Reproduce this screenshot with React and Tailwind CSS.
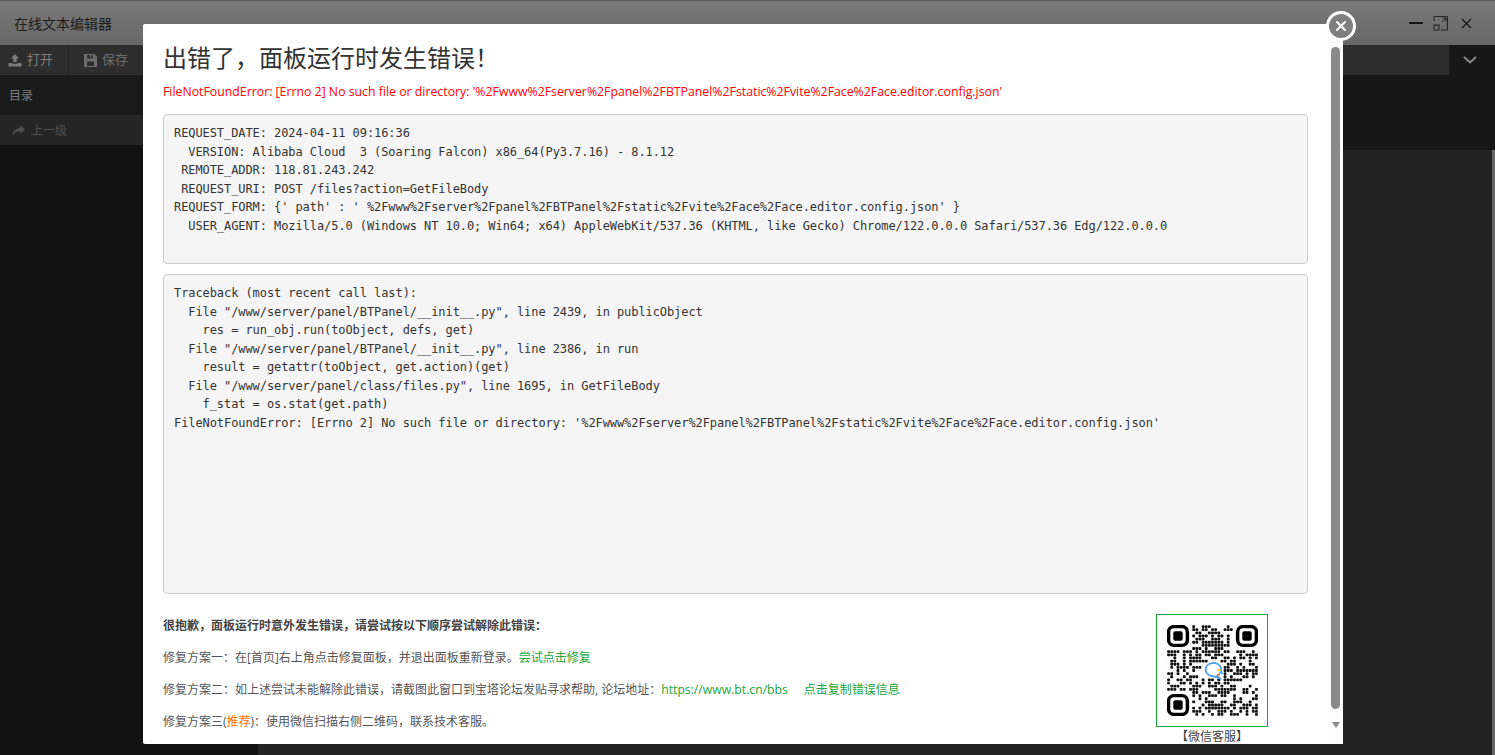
import React from 'react';
import { X } from 'lucide-react';

const sans = { fontFamily: '"Open Sans", "Noto Sans CJK SC", sans-serif' };
const mono = { fontFamily: '"DejaVu Sans Mono", monospace' };

const requestInfo = `REQUEST_DATE: 2024-04-11 09:16:36
  VERSION: Alibaba Cloud  3 (Soaring Falcon) x86_64(Py3.7.16) - 8.1.12
 REMOTE_ADDR: 118.81.243.242
 REQUEST_URI: POST /files?action=GetFileBody
REQUEST_FORM: {' path' : ' %2Fwww%2Fserver%2Fpanel%2FBTPanel%2Fstatic%2Fvite%2Face%2Face.editor.config.json' }
  USER_AGENT: Mozilla/5.0 (Windows NT 10.0; Win64; x64) AppleWebKit/537.36 (KHTML, like Gecko) Chrome/122.0.0.0 Safari/537.36 Edg/122.0.0.0`;

const traceback = `Traceback (most recent call last):
  File "/www/server/panel/BTPanel/__init__.py", line 2439, in publicObject
    res = run_obj.run(toObject, defs, get)
  File "/www/server/panel/BTPanel/__init__.py", line 2386, in run
    result = getattr(toObject, get.action)(get)
  File "/www/server/panel/class/files.py", line 1695, in GetFileBody
    f_stat = os.stat(get.path)
FileNotFoundError: [Errno 2] No such file or directory: '%2Fwww%2Fserver%2Fpanel%2FBTPanel%2Fstatic%2Fvite%2Face%2Face.editor.config.json'`;

// module pattern only has to look like the picture, deterministic so every run is the same
const qrModules = () => {
  const n = 29;
  const cells = [];
  let seed = 7;
  for (let y = 0; y < n; y++) {
    for (let x = 0; x < n; x++) {
      seed = (seed * 1103515245 + 12345) & 0x7fffffff;
      const inFinder = (x < 8 && y < 8) || (x > 20 && y < 8) || (x < 8 && y > 20);
      const inLogo = x > 10 && x < 18 && y > 11 && y < 17;
      if (!inFinder && !inLogo && (seed >> 16) % 100 < 54) cells.push([x, y]);
    }
  }
  return cells;
};

const Finder = ({ x, y }) => (
  <g>
    <rect x={x + 0.5} y={y + 0.5} width="6" height="6" rx="1.7" fill="none" stroke="#000" strokeWidth="1.1" />
    <rect x={x + 2} y={y + 2} width="3" height="3" rx="0.6" fill="#000" />
  </g>
);

const QrCode = () => (
  <svg viewBox="0 0 29 29" className="w-[91px] h-[91px]">
    {qrModules().map(([x, y]) => (
      <rect key={`${x}-${y}`} x={x + 0.05} y={y + 0.05} width="0.9" height="0.9" rx="0.25" fill="#111" />
    ))}
    <Finder x={0} y={0} />
    <Finder x={22} y={0} />
    <Finder x={0} y={22} />
    <path d="M12.3 14.2a2.5 2.1 0 1 1 3.6 1.9l.8.8-2.3-.6a2.5 2.1 0 0 1-2.1-2.1z" fill="none" stroke="#4aa3f0" strokeWidth="0.6" />
    <circle cx="16.6" cy="14.4" r="0.45" fill="#f5c542" />
    <circle cx="17.4" cy="15.2" r="0.45" fill="#58b7f0" />
    <circle cx="16.3" cy="16" r="0.45" fill="#f08a4a" />
  </svg>
);

const UploadGlyph = () => (
  <svg width="14" height="14" viewBox="0 0 14 14" fill="currentColor">
    <path d="M7 1l4.2 4.5H8.6V9H5.4V5.5H2.8z" />
    <path d="M0.5 10h4v0.8h5V10h4v3.5H.5z" />
  </svg>
);

const SaveGlyph = () => (
  <svg width="13" height="13" viewBox="0 0 13 13" fill="currentColor">
    <path fillRule="evenodd" d="M0 0h10.5L13 2.5V13H0zM3 1v3.6h6V1H7.4v2.4H5.8V1zM3 7.5V12h7V7.5z" />
  </svg>
);

const ReplyGlyph = () => (
  <svg width="13" height="12" viewBox="0 0 13 12" fill="currentColor">
    <path d="M8 0l5 4.5L8 9V6.2C4.8 6.2 2.6 7.3.6 11 .8 6.4 3.4 3.2 8 2.9z" />
  </svg>
);

const EditorBehind = () => (
  <div className="h-screen flex flex-col overflow-hidden bg-[#171717]" style={sans}>
    <div className="h-[45px] shrink-0 flex items-center justify-between pl-[14px] pr-[20px] bg-gradient-to-b from-[#7b7b7b] to-[#666666] border-t border-[#5c5c5c]">
      <span className="text-[14px] text-[#1c1c1c]">在线文本编辑器</span>
      <div className="flex items-center gap-[9px] text-[#111]">
        <div className="w-[14px] h-[2px] mr-[1px] bg-[#151515]" />
        <svg width="16" height="16" viewBox="0 0 16 16" fill="none" stroke="#222" strokeWidth="1">
          <path d="M1 6V1.5h13.5V15H8M9 7l4-4M9.5 3H13v3.5" />
          <rect x="1" y="10" width="5" height="5" />
        </svg>
        <X size={17} strokeWidth={1.6} />
      </div>
    </div>
    <div className="h-[30px] shrink-0 flex bg-[#2d2d2d]">
      <div className="w-[69px] flex items-center gap-[5px] pl-[8px] text-[13px] text-[#7c7c7c] border-r border-[#282828]">
        <UploadGlyph />
        <span>打开</span>
      </div>
      <div className="w-[70px] flex items-center gap-[5px] pl-[15px] text-[13px] text-[#6d6d6d]">
        <SaveGlyph />
        <span>保存</span>
      </div>
      <div className="flex-1" />
      <div className="w-[46px] pr-[4px] flex items-center justify-center bg-[#171717] text-[#8b8b8b]">
        <svg width="14" height="8" viewBox="0 0 14 8" fill="none" stroke="currentColor" strokeWidth="2">
          <path d="M1 1l6 5.5L13 1" />
        </svg>
      </div>
    </div>
    <div className="flex-1 flex min-h-0">
      <div className="w-[258px] shrink-0 flex flex-col bg-[#111111]">
        <div className="h-[40px] flex items-center pt-[2px] pl-[9px] text-[12px] text-[#7d7d7d] bg-[#1a1a1a]">目录</div>
        <div className="h-[30px] flex items-center gap-[6px] pt-[1px] pl-[12px] text-[12px] text-[#4f4f4f] bg-[#252525]">
          <ReplyGlyph />
          <span>上一级</span>
        </div>
      </div>
      <div className="flex-1 flex flex-col">
        <div className="h-[75px] shrink-0 bg-[#171717]" />
        <div className="flex-1 flex">
          <div className="flex-1 bg-[#222222]" />
          <div className="w-[3px] bg-[#666666]" />
        </div>
      </div>
    </div>
  </div>
);

const ErrorModal = () => (
  <div className="absolute left-[143px] top-[24px] w-[1200px] h-[720px] bg-white rounded-[2px] flex" style={sans}>
    <div className="flex-1 min-w-0 pl-[20px] pr-[20px]">
      <h1 className="mt-[16px] text-[24px] leading-[36px] text-[#333333]">出错了，面板运行时发生错误！</h1>
      <p className="mt-[7px] text-[12.3px] leading-[18px] text-[#ff0000]">
        FileNotFoundError: [Errno 2] No such file or directory: '%2Fwww%2Fserver%2Fpanel%2FBTPanel%2Fstatic%2Fvite%2Face%2Face.editor.config.json'
      </p>
      <pre className="mt-[13px] h-[150px] px-[10px] pt-[9px] text-[12px] tracking-[-0.08px] leading-[18.5px] text-[#333333] bg-[#f5f5f5] border border-[#cccccc] rounded-[4px] overflow-hidden" style={mono}>{requestInfo}</pre>
      <pre className="mt-[10px] h-[320px] px-[10px] pt-[9px] text-[12px] tracking-[-0.08px] leading-[18.5px] text-[#333333] bg-[#f5f5f5] border border-[#cccccc] rounded-[4px] overflow-hidden" style={mono}>{traceback}</pre>
      <div className="mt-[20px] flex justify-between">
        <div className="pt-[1px] text-[12px] text-[#555555]">
          <p className="h-[32px] leading-[22px] font-bold text-[#444444]">很抱歉，面板运行时意外发生错误，请尝试按以下顺序尝试解除此错误：</p>
          <p className="h-[32px] leading-[22px]">修复方案一：在[首页]右上角点击修复面板，并退出面板重新登录。<span className="text-[#20a53a]">尝试点击修复</span></p>
          <p className="h-[32px] leading-[22px]">修复方案二：如上述尝试未能解除此错误，请截图此窗口到宝塔论坛发贴寻求帮助, 论坛地址：<span className="text-[12.2px] text-[#20a53a]">https://www.bt.cn/bbs</span><span className="ml-[16px] text-[#20a53a]">点击复制错误信息</span></p>
          <p className="h-[32px] leading-[22px]">修复方案三(<span className="text-[#ff7300]">推荐</span>)：使用微信扫描右侧二维码，联系技术客服。</p>
        </div>
        <div className="w-[112px] mr-[40px] flex flex-col items-center">
          <div className="w-[112px] h-[113px] border border-[#20a53a] flex items-center justify-center">
            <QrCode />
          </div>
          <span className="mt-[1px] text-[12px] leading-[18px] text-[#444444]">【微信客服】</span>
        </div>
      </div>
    </div>
    <div className="w-[15px] shrink-0 flex flex-col items-center bg-[#fdfdfd] pt-[23px]">
      <div className="w-[9px] h-[662px] rounded-full bg-[#8a8a8a]" />
      <div className="mt-[13px] w-0 h-0 border-x-[4px] border-x-transparent border-t-[6px] border-t-[#8a8a8a]" />
    </div>
    <button className="absolute right-[-13px] top-[-13px] w-[30px] h-[30px] rounded-full bg-[#7f7f7f] border-[3px] border-white flex items-center justify-center text-white">
      <X size={16} strokeWidth={3} />
    </button>
  </div>
);

export default function App() {
  return (
    <div className="relative h-screen overflow-hidden">
      <EditorBehind />
      <ErrorModal />
    </div>
  );
}
